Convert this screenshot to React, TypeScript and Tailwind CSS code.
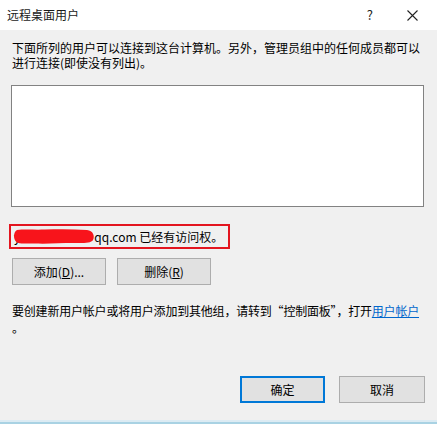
export default function App() {
  const font = { fontFamily: '"Noto Sans CJK SC", "Noto Sans", sans-serif' };
  return (
    <div
      className="w-[437px] h-[424px] bg-[#f0f0f0] flex flex-col text-[12px] text-[#000] overflow-hidden"
      style={font}
    >
      {/* title bar */}
      <div className="h-[30px] bg-white flex items-center shrink-0">
        <span className="pl-[7px] text-[12px] text-[#1a1a1a]">远程桌面用户</span>
        <span className="ml-auto mr-[34px] text-[13px] text-[#222]">?</span>
        <svg width="11" height="11" viewBox="0 0 11 11" className="mr-[19px]">
          <path d="M0.5 0.5L10.5 10.5M10.5 0.5L0.5 10.5" stroke="#222" strokeWidth="1.1" />
        </svg>
      </div>

      <div className="flex flex-col px-[12px] grow">
        <div className="mt-[10px] leading-[15px] w-[413px]">
          <div>下面所列的用户可以连接到这台计算机。另外，管理员组中的任何成员都可以</div>
          <div>进行连接(即使没有列出)。</div>
        </div>

        <div className="mt-[15px] ml-[-1px] w-[413px] h-[122px] bg-white border border-[#828282]" />

        <div className="mt-[17px] ml-[-3px] w-[221px] h-[25px] border-2 border-[#e3151f] flex items-center pl-[2px] whitespace-nowrap">
          <span className="text-[#000] pl-[1px]">y</span>
          <svg width="82" height="17" viewBox="0 0 82 17" className="ml-[-7px]">
            <path
              d="M4 2 C12 1 22 2 32 1.5 C46 1 60 1 74 2 C80 2.5 82 8 80 12 C78 15.5 70 15 60 15 C48 15 34 16 22 15.5 C14 15 8 16.5 4 14.5 C0 12 0 4 4 2 Z"
              fill="#f8141b"
            />
          </svg>
          <span className="ml-[-1px]">qq.com 已经有访问权。</span>
        </div>

        <div className="mt-[9px] flex gap-[11px]">
          <button className="w-[94px] h-[27px] bg-[#e1e1e1] border border-[#adadad] text-[12px]">
            添加(<span className="underline">D</span>)...
          </button>
          <button className="w-[94px] h-[27px] bg-[#e1e1e1] border border-[#adadad] text-[12px]">
            删除(<span className="underline">R</span>)
          </button>
        </div>

        <div className="mt-[17px] leading-[17px] whitespace-nowrap tracking-[-0.2px]">
          <div>
            要创建新用户帐户或将用户添加到其他组，请转到“控制面板”，打开
            <span className="text-[#0066cc] underline">用户帐户</span>
          </div>
          <div>。</div>
        </div>

        <div className="mt-auto mb-[17px] flex justify-end gap-[14px]">
          <button className="w-[85px] h-[27px] bg-[#e1e1e1] border-2 border-[#0078d7] text-[12px]">
            确定
          </button>
          <button className="w-[86px] h-[27px] bg-[#e1e1e1] border border-[#adadad] text-[12px]">
            取消
          </button>
        </div>
      </div>

      <div className="h-[2px] bg-[#dcebf3] shrink-0" />
      <div className="h-[2px] bg-[#a9d2e3] shrink-0" />
    </div>
  );
}
